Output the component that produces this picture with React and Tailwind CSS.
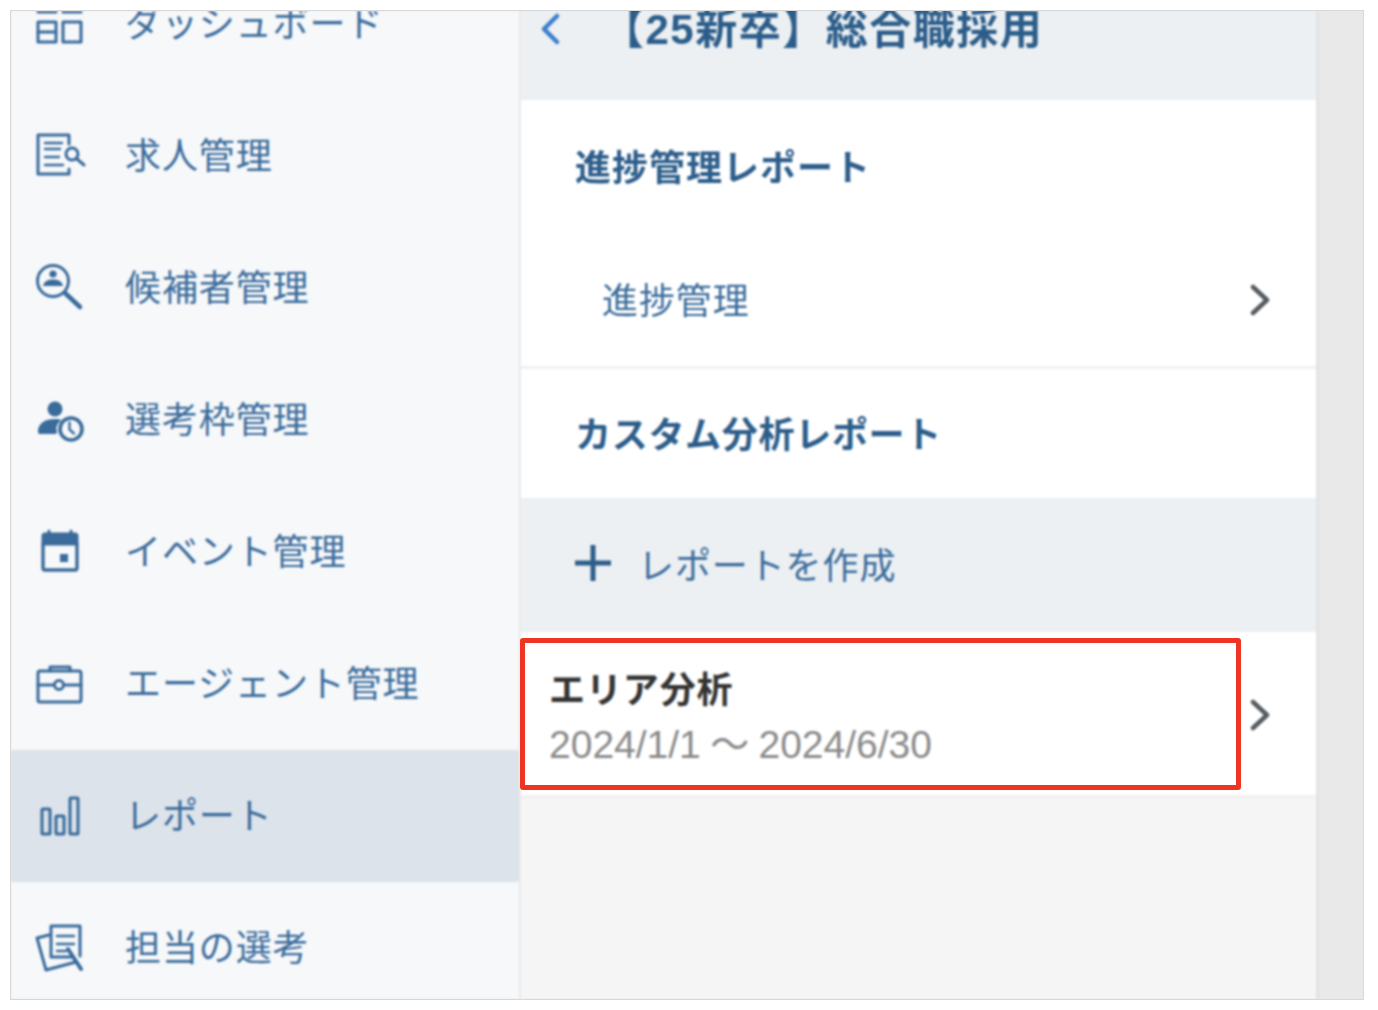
import React from "react"

const font = { fontFamily: '"Noto Sans CJK JP", "Noto Sans", sans-serif' }
const latinFont = { fontFamily: '"Liberation Sans", "Noto Sans CJK JP", sans-serif' }

const Icon = ({ children }) => (
    <svg
        viewBox="0 0 52 48"
        width="52"
        height="48"
        fill="none"
        stroke="currentColor"
        strokeWidth="3"
        strokeLinecap="round"
        strokeLinejoin="round"
        className="shrink-0 overflow-visible"
    >
        {children}
    </svg>
)

const DashboardIcon = () => (
    <Icon>
        <path d="M3 12h18M28 12h18" strokeWidth="3" />
        <rect x="3" y="22" width="18" height="20" />
        <rect x="28" y="22" width="18" height="20" />
        <path d="M3 32h18" />
    </Icon>
)

const JobIcon = () => (
    <Icon>
        <path d="M34 12V3H3v39h31v-5" />
        <path d="M10 11h17M10 17h15M10 25h14M10 33h18" strokeWidth="2.4" />
        <circle cx="37" cy="22" r="6" />
        <path d="M42 27l7 6" />
    </Icon>
)

const CandidateIcon = () => (
    <Icon>
        <circle cx="18" cy="17" r="15.5" />
        <path d="M30 29l15 14" strokeWidth="4.5" />
        <circle cx="18" cy="10" r="3.6" fill="currentColor" stroke="none" />
        <path d="M8 22c1-5 5-6.500 10-6.500s9 1.500 10 6.500z" fill="currentColor" stroke="none" />
    </Icon>
)

const SlotIcon = () => (
    <Icon>
        <circle cx="20" cy="13" r="7.500" fill="currentColor" stroke="none" />
        <path d="M3 36c0-9 7-13 17-13 3 0 5 .5 7 1-4 2-6 6-6 12z" fill="currentColor" stroke="none" />
        <rect x="3" y="33" width="19" height="5" rx="2" fill="currentColor" stroke="none" />
        <circle cx="36" cy="33" r="11" strokeWidth="3.6" />
        <path d="M34.500 26.500v7l4.500 4" strokeWidth="2.4" />
    </Icon>
)

const CalendarIcon = () => (
    <Icon>
        <path d="M8 16V8a2 2 0 0 1 2-2h30a2 2 0 0 1 2 2v8z" fill="currentColor" />
        <path d="M8 16v24a2 2 0 0 0 2 2h30a2 2 0 0 0 2-2V16" strokeWidth="3.4" />
        <path d="M14 3v4M36 3v4" strokeWidth="3" />
        <rect x="25" y="26" width="8" height="8" fill="currentColor" stroke="none" />
    </Icon>
)

const AgentIcon = () => (
    <Icon>
        <rect x="3" y="11" width="43" height="31" rx="2" />
        <path d="M15 11V7h20v4" />
        <path d="M3 25h16M29 25h17" />
        <circle cx="24" cy="25" r="4.500" />
    </Icon>
)

const ReportIcon = () => (
    <Icon>
        <rect x="7" y="17" width="8" height="25" rx="1" />
        <rect x="21" y="24" width="8" height="18" rx="1" />
        <rect x="35" y="6" width="8" height="36" rx="1" />
    </Icon>
)

const AssignedIcon = () => (
    <Icon>
        <path d="M14 11L2 14l9 32 30-8" />
        <path d="M16 2h29v30M16 2v31h20" />
        <path d="M22 12h17M22 20h17M22 27h9" strokeWidth="2.4" />
        <path d="M33 25l13 20" strokeWidth="4" />
    </Icon>
)

const Chevron = ({ flip, className }) => (
    <svg viewBox="0 0 20 32" width="20" height="32" fill="none" stroke="currentColor" strokeWidth="4.500" strokeLinecap="round" strokeLinejoin="round" className={className}>
        <path d={flip ? "M17 3L4 16l13 13" : "M3 3l14 13L3 29"} />
    </svg>
)

const navItems = [
    { label: "ダッシュボード", icon: DashboardIcon },
    { label: "求人管理", icon: JobIcon },
    { label: "候補者管理", icon: CandidateIcon },
    { label: "選考枠管理", icon: SlotIcon },
    { label: "イベント管理", icon: CalendarIcon },
    { label: "エージェント管理", icon: AgentIcon },
    { label: "レポート", icon: ReportIcon, active: true },
    { label: "担当の選考", icon: AssignedIcon },
]

function Sidebar() {
    return (
        <nav className="w-[508px] shrink-0 h-full overflow-hidden bg-[#f6f8fa] text-[#3a6b9b]">
            <ul className="-mt-[53px]">
                {navItems.map((item) => {
                    const NavIcon = item.icon
                    return (
                        <li
                            key={item.label}
                            className={`h-[132px] flex items-center pl-[24px] gap-[38px] ${item.active ? "bg-[#dce3ea]" : ""}`}
                        >
                            <NavIcon />
                            <span className="pb-[6px] text-[36px] tracking-[0.9px] leading-none">{item.label}</span>
                        </li>
                    )
                })}
            </ul>
        </nav>
    )
}

function ReportPanel() {
    return (
        <main className="ml-[2px] w-[795px] shrink-0 h-full bg-[#f5f5f5] text-[#2c5d8a] shadow-[3px_0_4px_rgba(0,0,0,0.03)]">
            <header className="h-[89px] bg-[#ecf0f3] flex items-start pl-[19px]">
                <Chevron flip className="text-[#3d7fcb] mt-[2px] shrink-0" />
                <h1 className="ml-[42px] -mt-[9px] text-[42px] leading-[56px] font-bold tracking-[1.5px] whitespace-nowrap" style={latinFont}>【25新卒】総合職採用</h1>
            </header>

            <section className="bg-white border-b-[3px] border-[#f0f1f2]">
                <h2 className="h-[134px] flex items-center pl-[54px] pb-[4px] text-[36px] font-bold tracking-[1px]">進捗管理レポート</h2>
                <div className="h-[132px] flex items-center justify-between pl-[81px] pr-[46px]">
                    <span className="pb-[4px] text-[36px] tracking-[0.9px] text-[#3a6b9b]">進捗管理</span>
                    <Chevron className="text-[#555b60]" />
                </div>
            </section>

            <section className="bg-white">
                <h2 className="h-[129px] flex items-center pl-[54px] pb-[4px] text-[36px] font-bold tracking-[0.7px]">カスタム分析レポート</h2>
            </section>

            <div className="h-[134px] bg-[#ecf0f3] flex items-center pl-[54px] pb-[4px]">
                <svg viewBox="0 0 36 36" width="36" height="36" stroke="currentColor" strokeWidth="5" className="shrink-0">
                    <path d="M18 0v36M0 18h36" />
                </svg>
                <span className="ml-[27px] text-[36px] tracking-[0.9px] text-[#3a6b9b]">レポートを作成</span>
            </div>

            <div className="h-[166px] bg-white border-b-[3px] border-[#f0f0f0] flex items-center justify-between pl-[28px] pr-[46px]">
                <div className="flex flex-col pt-[8px]">
                    <span className="text-[36px] leading-[50px] font-bold text-[#333333] tracking-[0.9px]">エリア分析</span>
                    <span className="mt-[5px] text-[39px] leading-[56px] text-[#8a8a8a] whitespace-nowrap [word-spacing:-1.5px]" style={latinFont}>2024/1/1 〜 2024/6/30</span>
                </div>
                <Chevron className="text-[#555b60] mt-[2px]" />
            </div>
        </main>
    )
}

export default function App() {
    return (
        <div className="w-[1378px] h-[1010px] bg-white pt-[10px] pl-[10px]" style={font}>
            <div className="relative w-[1354px] h-[990px] border border-[#d8d8d8] overflow-hidden bg-[#e9e9e9]">
                <div className="flex h-full blur-[1px]">
                    <Sidebar />
                    <ReportPanel />
                </div>
                {/* red highlight drawn over the list row */}
                <div className="absolute left-[509px] top-[627px] w-[721px] h-[152px] border-[5px] border-[#ee3524] rounded-[3px]" />
            </div>
        </div>
    )
}
